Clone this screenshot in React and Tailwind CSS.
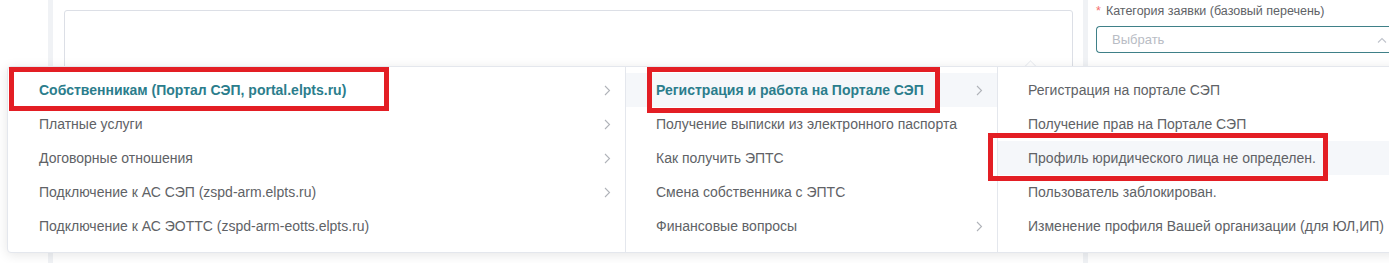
import React from 'react';

const col1 = [
  { label: 'Собственникам (Портал СЭП, portal.elpts.ru)', sub: true, active: true },
  { label: 'Платные услуги', sub: true },
  { label: 'Договорные отношения', sub: true },
  { label: 'Подключение к АС СЭП (zspd-arm.elpts.ru)', sub: true },
  { label: 'Подключение к АС ЭОТТС (zspd-arm-eotts.elpts.ru)' },
];

const col2 = [
  { label: 'Регистрация и работа на Портале СЭП', sub: true, active: true, hover: true },
  { label: 'Получение выписки из электронного паспорта' },
  { label: 'Как получить ЭПТС' },
  { label: 'Смена собственника с ЭПТС' },
  { label: 'Финансовые вопросы', sub: true },
];

const col3 = [
  { label: 'Регистрация на портале СЭП' },
  { label: 'Получение прав на Портале СЭП' },
  { label: 'Профиль юридического лица не определен.', hover: true },
  { label: 'Пользователь заблокирован.' },
  { label: 'Изменение профиля Вашей организации (для ЮЛ,ИП)' },
];

const Chevron = () => (
  <svg width="7" height="11" viewBox="0 0 7 11" fill="none" stroke="#b0b3b9" strokeWidth="1.1">
    <path d="M1 1l4.5 4.5L1 10" />
  </svg>
);

const Column = ({ items, width, pl, pr, border }) => (
  <div className={`py-[6px] ${border ? 'border-r border-[#e4e7ed]' : ''} ${width}`}>
    {items.map((item) => (
      <div
        key={item.label}
        className={`h-[34px] flex items-center justify-between ${pl} ${pr} ${item.hover ? 'bg-[#f5f7fa]' : ''}`}
      >
        <span
          className={`whitespace-nowrap text-[14px] ${
            item.active ? 'text-[#2b7d8c] font-bold' : 'text-[#606266]'
          }`}
        >
          {item.label}
        </span>
        {item.sub && <Chevron />}
      </div>
    ))}
  </div>
);

export default function App() {
  return (
    <div
      className="relative w-[1389px] h-[263px] overflow-hidden bg-white"
      style={{ fontFamily: '"Liberation Sans", Arial, sans-serif' }}
    >
      {/* page behind the popup */}
      <div className="flex h-full">
        <div className="w-[48px] shrink-0" />
        <div className="w-[5px] shrink-0 bg-[#f0f2f5]" />
        <div className="w-[11px] shrink-0" />
        <div className="w-[1009px] shrink-0 pt-[10px]">
          <div className="h-[120px] border border-[#dcdfe6] rounded-[3px]" />
        </div>
        <div className="w-[10px] shrink-0" />
        <div className="w-[5px] shrink-0 bg-[#f0f2f5]" />
        <div className="flex-1 pl-[8px] pt-[3px]">
          <div className="text-[12.5px] leading-[16px] text-[#606266] whitespace-nowrap">
            <span className="text-[#f56c6c] mr-[5px]">*</span>
            Категория заявки (базовый перечень)
          </div>
          <div className="mt-[7px] h-[27px] border border-[#3f8088] rounded-l-[4px] border-r-0 flex items-center justify-between pl-[15px] pr-[2px]">
            <span className="text-[13px] text-[#b8bcc4]">Выбрать</span>
            <svg width="10" height="6" viewBox="0 0 10 6" fill="none" stroke="#c0c4cc" strokeWidth="1.1">
              <path d="M1 5.5L5 1.5l4 4" />
            </svg>
          </div>
        </div>
      </div>

      {/* popper arrow */}
      <div className="absolute left-[1026px] top-[62px] w-[9px] h-[9px] rotate-45 bg-white border-l border-t border-[#eceef2]" />

      {/* cascader dropdown */}
      <div className="absolute left-[7px] top-[66px] right-[-10px] h-[187px] bg-white border border-[#e4e7ed] rounded-[4px] shadow-[0_2px_12px_rgba(0,0,0,0.1)] flex">
        <Column items={col1} width="w-[618px]" pl="pl-[31px]" pr="pr-[14px]" border />
        <Column items={col2} width="w-[372px]" pl="pl-[30px]" pr="pr-[14px]" border />
        <Column items={col3} width="flex-1" pl="pl-[30px]" pr="pr-[14px]" />
      </div>

      {/* red annotation frames */}
      <div className="absolute left-[9px] top-[67px] w-[380px] h-[44px] border-[5px] border-[#e31e24]" />
      <div className="absolute left-[647px] top-[67px] w-[293px] h-[46px] border-[5px] border-[#e31e24]" />
      <div className="absolute left-[988px] top-[133px] w-[340px] h-[48px] border-[5px] border-[#e31e24]" />
    </div>
  );
}
